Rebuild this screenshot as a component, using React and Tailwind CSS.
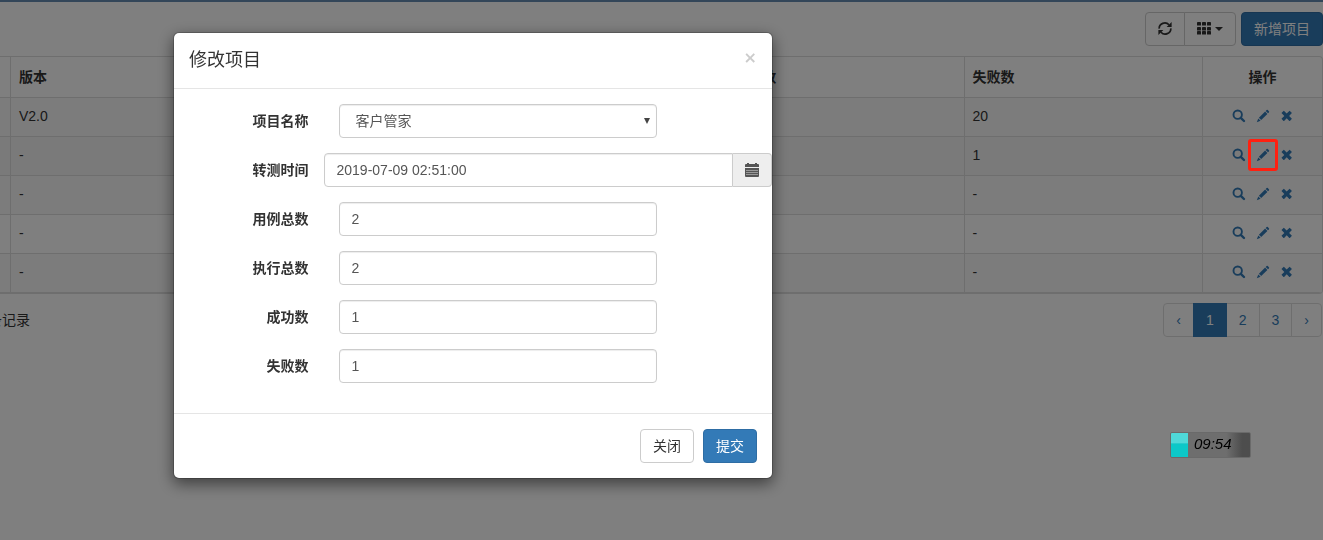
import { useState } from "react";

const columns = [
  { key: "version", title: "版本" },
  { key: "caseTotal", title: "" },
  { key: "runTotal", title: "" },
  { key: "passed", title: "成功数" },
  { key: "failed", title: "失败数" },
];

const projects = [
  { id: 1, version: "V2.0", failed: "20" },
  { id: 2, version: "-", failed: "1", marked: true },
  { id: 3, version: "-", failed: "-" },
  { id: 4, version: "-", failed: "-" },
  { id: 5, version: "-", failed: "-" },
];

const numberFields = [
  { name: "caseTotal", label: "用例总数" },
  { name: "runTotal", label: "执行总数" },
  { name: "passed", label: "成功数" },
  { name: "failed", label: "失败数" },
];

const controlClass =
  "block h-[34px] w-full rounded border border-[#ccc] bg-white px-3 text-[14px] text-[#555] shadow-[inset_0_1px_1px_rgba(0,0,0,0.075)] outline-none focus:border-[#66afe9]";

/* Icons */

function SearchIcon() {
  return (
    <svg viewBox="0 0 14 14" className="size-3.5" fill="none" stroke="currentColor">
      <circle cx="5.7" cy="5.7" r="4.2" strokeWidth="1.9" />
      <path d="M8.8 8.8 12 12" strokeWidth="2.4" strokeLinecap="round" />
    </svg>
  );
}

function PencilIcon() {
  return (
    <svg viewBox="0 0 14 14" className="size-3.5" fill="currentColor">
      <path d="M10.6 1.1q.6-.6 1.2 0l1.1 1.1q.6.6 0 1.2l-.9.9-2.3-2.3z" />
      <path d="M9.1 2.6l2.3 2.3-6.2 6.2-2.3-2.3z" />
      <path d="M2.3 9.4l2.3 2.3-3.8 1.5z" />
    </svg>
  );
}

function RemoveIcon() {
  return (
    <svg viewBox="0 0 14 14" className="size-3.5" fill="currentColor">
      <path d="M4.1 1.9 6.7 4.5l2.6-2.6q.3-.3.6 0l1.8 1.8q.3.3 0 .6L9.1 6.9l2.6 2.6q.3.3 0 .6l-1.8 1.8q-.3.3-.6 0L6.7 9.3l-2.6 2.6q-.3.3-.6 0l-1.8-1.8q-.3-.3 0-.6l2.6-2.6L1.7 4.3q-.3-.3 0-.6l1.8-1.8q.3-.3.6 0z" />
    </svg>
  );
}

function RefreshIcon() {
  return (
    <svg viewBox="0 0 14 14" className="size-3.5" fill="none" stroke="currentColor" strokeWidth="1.7">
      <path d="M1.2 6.6A5.6 5.4 0 0 1 11 2.8" />
      <path d="M12.8 6.4A5.6 5.4 0 0 1 3 10.2" />
      <path d="M13.6 0v5H8.6z" fill="currentColor" stroke="none" />
      <path d="M.4 13V8h5z" fill="currentColor" stroke="none" />
    </svg>
  );
}

function GridIcon() {
  return (
    <svg viewBox="0 0 14 14" className="size-3.5" fill="currentColor">
      {[0, 5, 9].map((y) =>
        [0, 5, 10].map((x) => <rect key={`${x}-${y}`} x={x} y={y} width="4" height="3.6" rx="0.4" />)
      )}
    </svg>
  );
}

function CalendarIcon() {
  return (
    <svg viewBox="0 0 14 14" className="size-3.5" fill="currentColor">
      <path d="M2 0h2v1h6V0h2v1h1q1 0 1 1v2H0V2q0-1 1-1h1z" />
      <path d="M0 5h14v8q0 1-1 1H1q-1 0-1-1z" />
      <g fill="#ddd">
        {[7, 9, 11].map((y) =>
          [2, 4, 6, 8, 10, 12].map((x) => (
            <rect key={`${x}-${y}`} x={x - 0.5} y={y} width="1" height="1" />
          ))
        )}
      </g>
    </svg>
  );
}

/* Page */

function Toolbar() {
  return (
    <div className="flex justify-end gap-[5px] pt-2.5">
      <div className="flex">
        <button
          type="button"
          aria-label="刷新"
          className="flex h-[34px] items-center rounded-l border border-[#ccc] bg-white px-3 text-[#333]"
        >
          <RefreshIcon />
        </button>
        <button
          type="button"
          aria-label="列"
          className="-ml-px flex h-[34px] items-center gap-1 rounded-r border border-[#ccc] bg-white px-3 text-[#333]"
        >
          <GridIcon />
          <svg viewBox="0 0 8 4" className="h-1 w-2" fill="currentColor">
            <path d="M0 0h8L4 4z" />
          </svg>
        </button>
      </div>
      <button
        type="button"
        className="h-[34px] rounded border border-[#2e6da4] bg-[#337ab7] px-3 text-white"
      >
        新增项目
      </button>
    </div>
  );
}

function RowActions({ marked }) {
  return (
    <div className="flex items-center justify-center gap-2.5 text-[#337ab7]">
      <button type="button" aria-label="查看">
        <SearchIcon />
      </button>
      <button type="button" aria-label="编辑" className="relative">
        <PencilIcon />
        {marked && (
          <span className="pointer-events-none absolute -inset-x-2 -inset-y-[9px] z-20 rounded-[3px] border-3 border-[#ff2010]" />
        )}
      </button>
      <button type="button" aria-label="删除">
        <RemoveIcon />
      </button>
    </div>
  );
}

function ProjectTable() {
  return (
    <div className="mt-2.5 overflow-hidden rounded-r border border-l-0 border-[#ddd]">
      <table className="w-full table-fixed border-separate border-spacing-0">
        <colgroup>
          <col className="w-2.5" />
          {columns.map(({ key }) => (
            <col key={key} />
          ))}
          <col className="w-[120px]" />
        </colgroup>
        <thead>
          <tr className="h-[41px]">
            <td className="border-b border-[#ddd]" />
            {columns.map(({ key, title }) => (
              <th key={key} className="border-b border-l border-[#ddd] px-2 text-left font-bold">
                {title}
              </th>
            ))}
            <th className="border-b border-l border-[#ddd] px-2 text-center font-bold">操作</th>
          </tr>
        </thead>
        <tbody>
          {projects.map((project) => (
            <tr
              key={project.id}
              className={`h-[39px] ${project.marked ? "bg-[#f5f5f5]" : "odd:bg-[#f9f9f9]"}`}
            >
              <td className="border-b border-[#ddd]" />
              {columns.map(({ key }) => (
                <td key={key} className="border-b border-l border-[#ddd] px-2 pb-0.5">
                  {project[key]}
                </td>
              ))}
              <td className="border-b border-l border-[#ddd] px-2 pb-0.5">
                <RowActions marked={project.marked} />
              </td>
            </tr>
          ))}
        </tbody>
      </table>
    </div>
  );
}

function Pagination() {
  const pages = ["‹", "1", "2", "3", "›"];

  return (
    <div className="mt-[9px] flex items-center justify-between">
      <span className="-ml-3">条记录</span>
      <nav className="mr-px flex">
        {pages.map((page) => (
          <a
            key={page}
            href="#"
            className={`-ml-px border px-3 py-1.5 first:rounded-l last:rounded-r ${
              page === "1"
                ? "z-1 border-[#337ab7] bg-[#337ab7] text-white"
                : "border-[#ddd] bg-white text-[#337ab7]"
            }`}
          >
            {page}
          </a>
        ))}
      </nav>
    </div>
  );
}

/* Dialog */

function FormRow({ id, label, children }) {
  return (
    <div className="mb-[15px] grid grid-cols-12">
      <label htmlFor={id} className="col-span-3 px-[15px] pt-[7px] text-right font-bold">
        {label}
      </label>
      {children}
    </div>
  );
}

function EditProjectModal() {
  const [form, setForm] = useState({
    project: "客户管家",
    testTime: "2019-07-09 02:51:00",
    caseTotal: "2",
    runTotal: "2",
    passed: "1",
    failed: "1",
  });

  const handleChange = (e) => {
    setForm({ ...form, [e.target.name]: e.target.value });
  };

  return (
    <div
      role="dialog"
      aria-labelledby="modal-title"
      className="w-[600px] max-w-full rounded-md border border-black/20 bg-white bg-clip-padding shadow-[0_5px_15px_rgba(0,0,0,0.5)]"
    >
      <div className="flex items-start justify-between border-b border-[#e5e5e5] p-[15px]">
        <h4 id="modal-title" className="text-[18px] leading-[25px]">
          修改项目
        </h4>
        <button
          type="button"
          aria-label="关闭"
          className="font-['DejaVu_Sans',sans-serif] text-[16px] leading-5 font-bold text-[#ccc]"
        >
          ×
        </button>
      </div>

      <form className="pt-[15px] pb-[15px]">
        <FormRow id="project" label="项目名称">
          <div className="relative col-span-7 px-[15px]">
            <select
              id="project"
              name="project"
              value={form.project}
              onChange={handleChange}
              className={`${controlClass} appearance-none pl-4`}
            >
              <option>客户管家</option>
            </select>
            <svg
              viewBox="0 0 6 6"
              className="pointer-events-none absolute top-3.5 right-[22px] size-1.5"
              fill="#444"
            >
              <path d="M0 0h6L3 6z" />
            </svg>
          </div>
        </FormRow>

        <FormRow id="testTime" label="转测时间">
          <div className="col-span-9 flex">
            <input
              id="testTime"
              name="testTime"
              value={form.testTime}
              onChange={handleChange}
              className={`${controlClass} rounded-r-none`}
            />
            <button
              type="button"
              aria-label="选择时间"
              className="flex items-center rounded-r border border-l-0 border-[#ccc] bg-[#eee] px-3 text-[#555]"
            >
              <CalendarIcon />
            </button>
          </div>
        </FormRow>

        {numberFields.map(({ name, label }) => (
          <FormRow key={name} id={name} label={label}>
            <div className="col-span-7 px-[15px]">
              <input
                id={name}
                name={name}
                value={form[name]}
                onChange={handleChange}
                className={controlClass}
              />
            </div>
          </FormRow>
        ))}
      </form>

      <div className="flex justify-end gap-[9px] border-t border-[#e5e5e5] p-[15px]">
        <button type="button" className="h-[34px] rounded border border-[#ccc] bg-white px-3">
          关闭
        </button>
        <button
          type="button"
          className="h-[34px] rounded border border-[#2e6da4] bg-[#337ab7] px-3 text-white"
        >
          提交
        </button>
      </div>
    </div>
  );
}

function RecordingClock() {
  return (
    <div className="fixed right-[72px] bottom-[82px] z-30 flex h-[26px] w-[81px] overflow-hidden rounded-xs border border-[#6a6a6a] bg-linear-to-r from-[#6e6e6e] from-70% to-[#4d4d4d] to-90% text-black">
      <span className="w-[17px] bg-linear-to-b from-[#4fd9d9] from-40% to-[#0cc8c8] to-45%" />
      <span className="pl-1.5 text-[15px] leading-[22px] italic">09:54</span>
    </div>
  );
}

export default function App() {
  return (
    <div className="font-['Liberation_Sans','Noto_Sans_CJK_SC',sans-serif] text-[14px] leading-5 text-[#333]">
      <main className="overflow-hidden border-t-2 border-[#668cb2]">
        <Toolbar />
        <ProjectTable />
        <Pagination />
      </main>

      <div className="fixed inset-0 z-10 bg-black/50" />
      <div className="fixed top-8 left-[173px] z-10">
        <EditProjectModal />
      </div>
      <RecordingClock />
    </div>
  );
}
